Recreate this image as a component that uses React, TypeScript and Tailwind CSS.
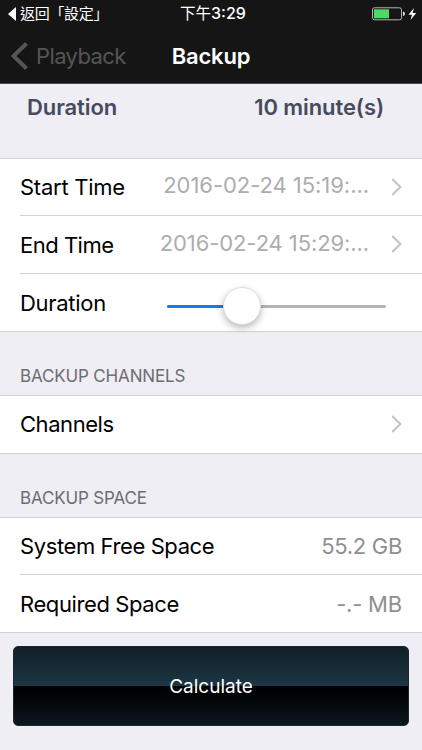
import React, { useState } from 'react'

const Chevron: React.FC = () => (
  <svg className="shrink-0" width="12" height="20" viewBox="0 0 12 20" fill="none">
    <path d="M1.2 2L9.4 10L1.2 18" stroke="#c4c4c9" strokeWidth="2.1" />
  </svg>
)

const StatusBar: React.FC = () => (
  <div className="h-7 pb-0.5 grid grid-cols-3 items-center text-white leading-[26px]">
    <div className="flex items-center pl-2">
      <svg width="8" height="14" viewBox="0 0 8 14">
        <path d="M8 0V14L0 7Z" fill="#fff" />
      </svg>
      <span className="ml-1 text-[15px] tracking-[-0.3px] whitespace-nowrap">返回「設定」</span>
    </div>
    <span className="text-center text-[16px] ml-1">
      <span className="text-[15.5px]">下午</span>
      <span className="font-medium">3:29</span>
    </span>
    <div className="flex items-center justify-end pr-[5px]">
      <svg width="46" height="14" viewBox="0 0 46 14">
        <rect x="1.5" y="0.8" width="29" height="12" rx="2" fill="none" stroke="#b5b5b5" />
        <rect x="3" y="2.3" width="15" height="9" fill="#4cd964" />
        <path d="M32 4.5Q34 5 34 6.8Q34 8.6 32 9.1Z" fill="#e5e5e5" />
        <path d="M43 1L37.5 7.8H41L39.5 13L45.2 6H41.6Z" fill="#fff" />
      </svg>
    </div>
  </div>
)

const Row: React.FC<{ label: string; spacing: string; last?: boolean; children?: React.ReactNode }> = ({
  label,
  spacing,
  last,
  children,
}) => (
  <div className="flex-1 min-h-0 pl-5">
    <div
      className={`h-full flex items-center justify-between ${
        last ? '' : 'border-b border-[#d2d2d5]'
      }`}
    >
      <span className={`text-[22px] text-black whitespace-nowrap ${spacing}`}>{label}</span>
      {children}
    </div>
  </div>
)

const DateValue: React.FC<{ value: string; spacing: string }> = ({ value, spacing }) => (
  <div className="flex items-center pr-[19px] text-[22px] text-[#adadad]">
    <span className={`mr-[22px] ${spacing}`}>{value}</span>
    <Chevron />
  </div>
)

const SectionTitle: React.FC<{ title: string }> = ({ title }) => (
  <h2 className="h-[63px] shrink-0 pl-5 pt-[34px] text-[17px] leading-5 text-[#6d6d72] tracking-[-0.15px]">
    {title}
  </h2>
)

const App: React.FC = () => {
  const [duration, setDuration] = useState<number>(10)
  const percent = (duration / 30) * 100

  return (
    <div className="w-full h-[750px] flex flex-col overflow-hidden bg-[#efeef4] font-['Inter','Noto_Sans_CJK_TC',sans-serif]">
      <header className="h-[84px] shrink-0 bg-[#151515] border-b border-[#4c494f]">
        <StatusBar />
        <nav className="h-14 grid grid-cols-3 items-center">
          <button className="flex items-center pl-[11px] text-[#555] text-[22px]">
            <svg className="shrink-0" width="18" height="28" viewBox="0 0 18 28" fill="none">
              <path d="M15.5 1.5L2.5 14L15.5 26.5" stroke="#555" strokeWidth="4" />
            </svg>
            <span className="ml-[7px] tracking-[-0.6px]">Playback</span>
          </button>
          <h1 className="text-center text-white font-semibold text-[22px] tracking-[-0.2px]">
            Backup
          </h1>
        </nav>
      </header>

      <div className="h-[74px] shrink-0 flex justify-between pl-[27px] pr-[38px] pt-[9px] text-[22px] leading-7 font-semibold text-[#474b5e]">
        <span className="tracking-[-0.1px]">Duration</span>
        <span className="tracking-[-0.1px]">{duration} minute(s)</span>
      </div>

      <section className="bg-white border-y border-[#d2d2d5] shrink-0 h-[174px] flex flex-col">
        <Row label="Start Time" spacing="tracking-[-0.25px]">
          <DateValue value="2016-02-24 15:19:..." spacing="-mt-1 tracking-[-0.05px]" />
        </Row>
        <Row label="End Time" spacing="tracking-[-0.5px] pt-0.5">
          <DateValue value="2016-02-24 15:29:..." spacing="-mt-0.5 tracking-[-0.1px]" />
        </Row>
        <Row label="Duration" spacing="tracking-[-0.3px] pt-0.5" last>
          <div className="relative w-[219px] h-[38px] mr-9 mt-[9px] flex items-center">
            <div className="w-full h-[3px] rounded-full bg-[#b4b4b4]">
              <div className="h-full rounded-full bg-[#147af0]" style={{ width: `${percent}%` }} />
            </div>
            <div
              className="absolute -top-px size-[38px] -ml-[17px] rounded-full bg-white border border-[#dedede] shadow-[0_3px_7px_rgba(0,0,0,0.28)]"
              style={{ left: `${percent}%` }}
            />
            <input
              type="range"
              min={0}
              max={30}
              value={duration}
              onChange={(e) => setDuration(Number(e.target.value))}
              className="absolute inset-0 w-full opacity-0"
            />
          </div>
        </Row>
      </section>

      <SectionTitle title="BACKUP CHANNELS" />
      <section className="bg-white border-y border-[#d2d2d5] shrink-0 h-[59px] flex flex-col">
        <Row label="Channels" spacing="tracking-[-0.45px]" last>
          <div className="pr-[19px] pb-0.5">
            <Chevron />
          </div>
        </Row>
      </section>

      <SectionTitle title="BACKUP SPACE" />
      <section className="bg-white border-y border-[#d2d2d5] shrink-0 h-[116px] flex flex-col">
        <Row label="System Free Space" spacing="tracking-[-0.4px]">
          <span className="pr-5 text-[22px] text-[#8e8e93] tracking-[-0.3px]">55.2 GB</span>
        </Row>
        <Row label="Required Space" spacing="tracking-[-0.4px] pt-0.5" last>
          <span className="pr-5 pt-0.5 text-[22px] text-[#8e8e93] tracking-[-0.2px]">-.- MB</span>
        </Row>
      </section>

      <button className="mt-[13px] ml-[13px] pt-0.5 w-[396px] h-20 shrink-0 rounded-[5px] border border-[#1b252b] text-[19px] text-white bg-[linear-gradient(180deg,#101f26_0%,#1c3745_49.5%,#000_50.5%,#03070a_70%,#0d181f_100%)]">
        Calculate
      </button>
    </div>
  )
}

export default App
